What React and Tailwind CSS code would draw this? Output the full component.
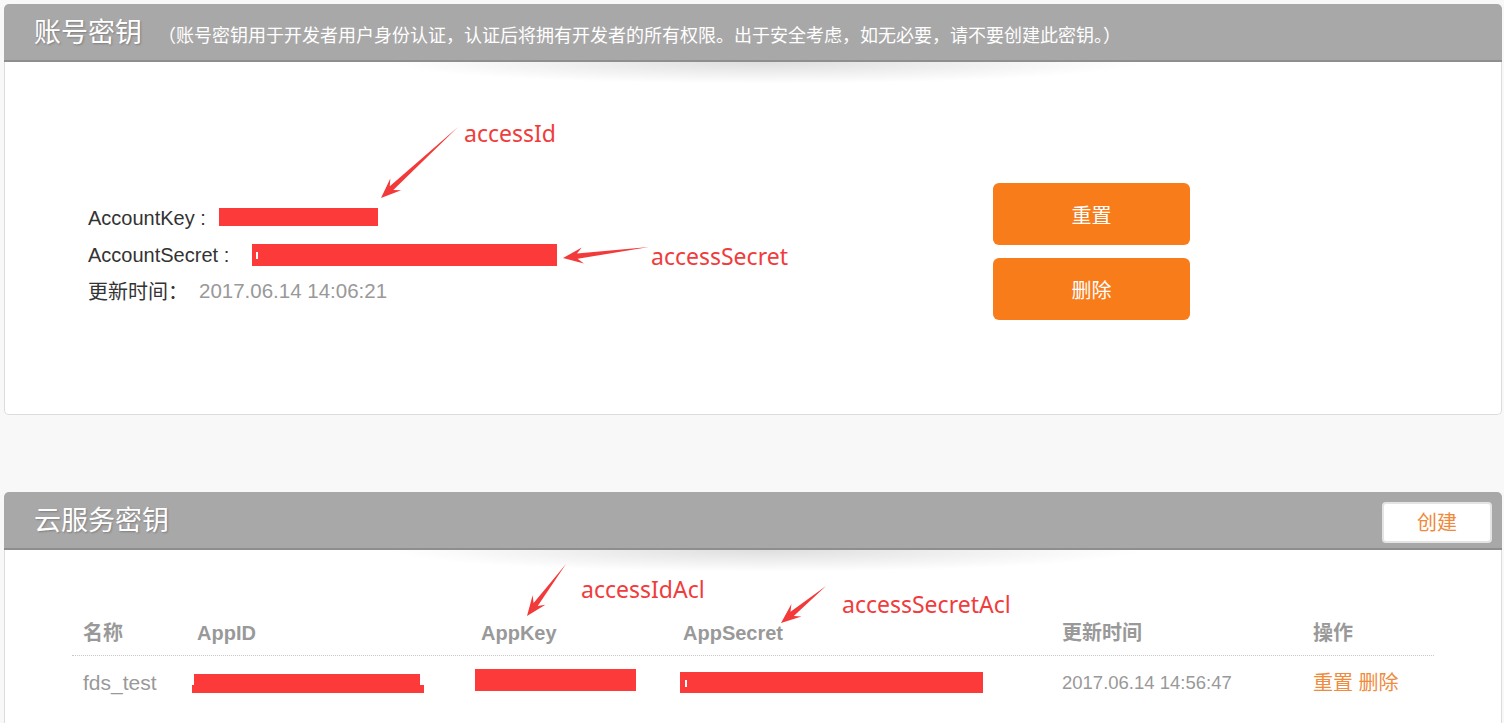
import React from 'react';

const CJK = { fontFamily: '"Liberation Sans", "Noto Sans CJK SC", sans-serif' };
const NOTE = { fontFamily: '"Noto Sans", "Noto Sans CJK SC", sans-serif' };

// tapered annotation arrow: thin tail, swept-back head
function arrowPoints(x1, y1, x2, y2) {
  const dx = x2 - x1;
  const dy = y2 - y1;
  const len = Math.hypot(dx, dy);
  const ux = dx / len;
  const uy = dy / len;
  const nx = -uy;
  const ny = ux;
  const H = 20;
  const hw = 8;
  const sw = 2.6;
  const bx = x2 - ux * H;
  const by = y2 - uy * H;
  const kx = x2 - ux * H * 0.72;
  const ky = y2 - uy * H * 0.72;
  const p = [
    [x1, y1],
    [kx + nx * sw, ky + ny * sw],
    [bx + nx * hw, by + ny * hw],
    [x2, y2],
    [bx - nx * hw, by - ny * hw],
    [kx - nx * sw, ky - ny * sw],
  ];
  return p.map(([a, b]) => `${a.toFixed(1)},${b.toFixed(1)}`).join(' ');
}

const arrows = [
  [458, 127, 381, 198],
  [649, 247, 563, 258],
  [566, 564, 527, 616],
  [826, 586, 781, 623],
];

const notes = [
  { text: 'accessId', x: 464, y: 119 },
  { text: 'accessSecret', x: 651, y: 242 },
  { text: 'accessIdAcl', x: 581, y: 575 },
  { text: 'accessSecretAcl', x: 842, y: 590 },
];

function Redact({ className }) {
  return <span className={`inline-block bg-[#fc3a3a] ${className}`} />;
}

function CardHeader({ title, sub, action }) {
  return (
    <div className="h-[58px] bg-[#a9a8a8] border-b-2 border-[#8e8e8e] rounded-t-[5px] flex items-start justify-between">
      <div className="flex items-baseline pl-[30px] pt-[12px]">
        <span className="text-[27px] leading-[34px] text-white [text-shadow:1px_1px_2px_rgba(0,0,0,0.25)]">{title}</span>
        {sub && (
          <span className="ml-[16px] text-[18px] text-white">{sub}</span>
        )}
      </div>
      {action}
    </div>
  );
}

function HeaderShadow() {
  return (
    <div className="absolute left-[380px] top-0 w-[760px] h-[22px] bg-[radial-gradient(ellipse_at_top,rgba(0,0,0,0.13),rgba(0,0,0,0)_70%)]" />
  );
}

export default function App() {
  const cols = 'grid grid-cols-[114px_284px_202px_379px_251px_1fr]';

  return (
    <div className="relative w-[1504px] h-[723px] overflow-hidden bg-[#f8f8f8]" style={CJK}>
      <div className="pt-1 pl-1 pr-[2px]">
        {/* 账号密钥 */}
        <div>
          <CardHeader
            title="账号密钥"
            sub="（账号密钥用于开发者用户身份认证，认证后将拥有开发者的所有权限。出于安全考虑，如无必要，请不要创建此密钥。）"
          />
          <div className="relative h-[353px] bg-white border-x border-b border-[#dcdcdc] rounded-b-[5px] flex pl-[83px] pt-[121px]">
            <HeaderShadow />
            <div className="w-[905px] mt-[16px] text-[20px] text-[#333]">
              <div className="h-[37px] flex items-center">
                <span className="w-[131px]">AccountKey :</span>
                <Redact className="w-[159px] h-[18px] -mt-[2px]" />
              </div>
              <div className="h-[37px] flex items-center">
                <span className="w-[164px]">AccountSecret :</span>
                <span className="relative inline-block w-[305px] h-[22px] bg-[#fc3a3a]">
                  <span className="absolute left-[4px] top-[8px] w-[2px] h-[7px] bg-white" />
                </span>
              </div>
              <div className="h-[37px] flex items-center">
                <span className="w-[111px]">更新时间：</span>
                <span className="text-[#999] text-[20.5px]">2017.06.14 14:06:21</span>
              </div>
            </div>
            <div className="flex flex-col gap-[13px]">
              <button className="w-[197px] h-[62px] pt-[3px] rounded-[6px] bg-[#f97c1b] text-white text-[20px]">重置</button>
              <button className="w-[197px] h-[62px] pt-[3px] rounded-[6px] bg-[#f97c1b] text-white text-[20px]">删除</button>
            </div>
          </div>
        </div>

        {/* 云服务密钥 */}
        <div className="mt-[77px]">
          <CardHeader
            title="云服务密钥"
            action={
              <div className="pt-[10px] pr-[10px]">
                <button className="w-[110px] h-[41px] bg-white border-2 border-[#e4e4e4] rounded-[4px] text-[#f0883a] text-[20px]">创建</button>
              </div>
            }
          />
          <div className="relative h-[240px] bg-white border-x border-[#dcdcdc] pl-[67px] pr-[67px] pt-[60px]">
            <HeaderShadow />
            <div className="w-[1362px]">
              <div className={`${cols} h-[46px] items-center border-b border-dotted border-[#c8c8c8] text-[20px] font-bold text-[#999]`}>
                <span className="pl-[11px]">名称</span>
                <span className="pl-[11px]">AppID</span>
                <span className="pl-[11px]">AppKey</span>
                <span className="pl-[11px]">AppSecret</span>
                <span className="pl-[11px]">更新时间</span>
                <span className="pl-[11px]">操作</span>
              </div>
              <div className={`${cols} h-[54px] items-center text-[20px] text-[#999]`}>
                <span className="pl-[11px] text-[21px]">fds_test</span>
                <span className="pl-[6px] flex flex-col">
                  <span className="w-[226px] h-[11px] ml-[2px] bg-[#fc3a3a]" />
                  <span className="w-[232px] h-[8px] bg-[#fc3a3a]" />
                </span>
                <span className="pl-[5px]"><Redact className="w-[161px] h-[22px] mt-[2px]" /></span>
                <span className="pl-[8px]">
                  <span className="relative inline-block w-[303px] h-[21px] mt-[6px] bg-[#fc3a3a]">
                    <span className="absolute left-[5px] top-[8px] w-[2px] h-[7px] bg-white" />
                  </span>
                </span>
                <span className="pl-[11px] text-[18.5px]">2017.06.14 14:56:47</span>
                <span className="pl-[11px] text-[#f08a3c]">重置 删除</span>
              </div>
            </div>
          </div>
        </div>
      </div>

      {/* annotations laid over the page */}
      <svg className="absolute inset-0 pointer-events-none" width="1504" height="723">
        {arrows.map((a, i) => (
          <polygon key={i} points={arrowPoints(...a)} fill="#f33a3a" />
        ))}
      </svg>
      {notes.map((n) => (
        <span
          key={n.text}
          className="absolute text-[23px] leading-[28px] text-[#f03c3c]"
          style={{ ...NOTE, left: n.x, top: n.y }}
        >
          {n.text}
        </span>
      ))}
    </div>
  );
}
